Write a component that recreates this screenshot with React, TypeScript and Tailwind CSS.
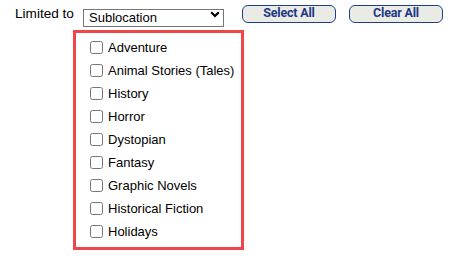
import React from 'react';

const GENRES = [
  'Adventure',
  'Animal Stories (Tales)',
  'History',
  'Horror',
  'Dystopian',
  'Fantasy',
  'Graphic Novels',
  'Historical Fiction',
  'Holidays',
];

function PillButton({ label }: { label: string }) {
  return (
    <button
      type="button"
      className="w-[94px] h-[18px] flex items-center justify-center rounded-[6px] border-[1.5px] border-[#1d3e8e] bg-[#ebebe6] text-[12.5px] font-bold text-[#1d3a86] leading-none tracking-[-0.2px]"
      style={{ fontFamily: 'Roboto, sans-serif' }}
    >
      {label}
    </button>
  );
}

export default function App() {
  return (
    <div
      className="w-[467px] h-[265px] bg-white text-black"
      style={{ fontFamily: '"Liberation Sans", Arial, sans-serif' }}
    >
      {/* filter row */}
      <div className="flex items-center pt-[5px] pl-[15px] h-[18px] box-content">
        <span className="text-[13.6px] leading-none w-[68px]">Limited to</span>
        <div className="relative w-[141px] h-[18px]">
          <select
            className="appearance-none w-full h-full border border-[#767676] bg-white pl-[5px] text-[13px] leading-none outline-none"
            defaultValue="Sublocation"
          >
            <option>Sublocation</option>
          </select>
          <svg
            className="absolute right-[4px] top-[6px] pointer-events-none"
            width="10"
            height="7"
            viewBox="0 0 10 7"
          >
            <polyline points="1.2,1.2 5,5 8.8,1.2" fill="none" stroke="#000" strokeWidth="2.2" />
          </svg>
        </div>
        <div className="flex gap-[13px] ml-[18px] -mt-[1px]">
          <PillButton label="Select All" />
          <PillButton label="Clear All" />
        </div>
      </div>

      {/* genre list */}
      <div className="ml-[73px] mt-[7px] w-[171px] h-[220px] border-[3px] border-[#f04649] pt-[3px] pl-[14px]">
        {GENRES.map((g) => (
          <label key={g} className="flex items-center h-[23px] gap-[5px] text-[13px]">
            <input type="checkbox" className="m-0 w-[13px] h-[13px]" />
            <span>{g}</span>
          </label>
        ))}
      </div>
    </div>
  );
}
